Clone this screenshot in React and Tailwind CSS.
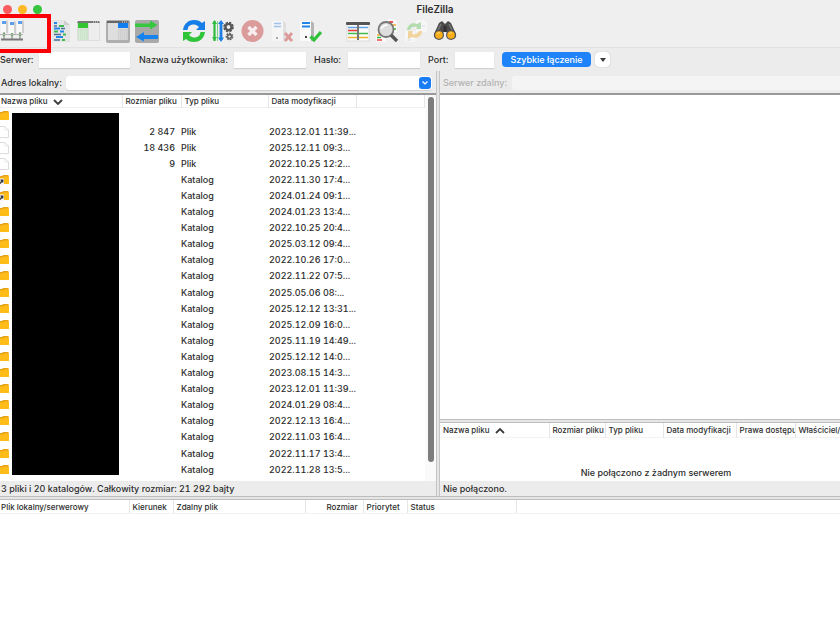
import React from "react";

const files = [
  ["up", "", "", ""],
  ["file", "2 847", "Plik", "2023.12.01 11:39..."],
  ["file", "18 436", "Plik", "2025.12.11 09:3..."],
  ["file", "9", "Plik", "2022.10.25 12:2..."],
  ["link", "", "Katalog", "2022.11.30 17:4..."],
  ["link", "", "Katalog", "2024.01.24 09:1..."],
  ["dir", "", "Katalog", "2024.01.23 13:4..."],
  ["dir", "", "Katalog", "2022.10.25 20:4..."],
  ["dir", "", "Katalog", "2025.03.12 09:4..."],
  ["dir", "", "Katalog", "2022.10.26 17:0..."],
  ["dir", "", "Katalog", "2022.11.22 07:5..."],
  ["dir", "", "Katalog", "2025.05.06 08:..."],
  ["dir", "", "Katalog", "2025.12.12 13:31..."],
  ["dir", "", "Katalog", "2025.12.09 16:0..."],
  ["dir", "", "Katalog", "2025.11.19 14:49..."],
  ["dir", "", "Katalog", "2025.12.12 14:0..."],
  ["dir", "", "Katalog", "2023.08.15 14:3..."],
  ["dir", "", "Katalog", "2023.12.01 11:39..."],
  ["dir", "", "Katalog", "2024.01.29 08:4..."],
  ["dir", "", "Katalog", "2022.12.13 16:4..."],
  ["dir", "", "Katalog", "2022.11.03 16:4..."],
  ["dir", "", "Katalog", "2022.11.17 13:4..."],
  ["dir", "", "Katalog", "2022.11.28 13:5..."],
  ["dir", "", "", ""],
];

function RowIcon({ kind }) {
  if (kind === "file") {
    return (
      <svg width="10" height="12" viewBox="0 0 10 12" className="block">
        <path d="M-2 .5H5L8.500 4V11.500H-2Z" fill="#fff" stroke="#dcdcdc" />
        <path d="M5 .5V4H8.500" fill="none" stroke="#e8e8e8" />
      </svg>
    );
  }
  return (
    <svg width="10" height="12" viewBox="0 0 10 12" className="block">
      <path d="M-3 2H2L3 1H8.500V9.500H-3Z" fill="#e8a317" />
      <path d="M-3 3.500H2.500L4 2.500H9V10H-3Z" fill="#fdbc18" />
      {kind === "link" && (
        <>
          <path d="M-1 4.500H4V11H-1Z" fill="#f4f4f4" />
          <path d="M0 9.500L2.500 6.500M.5 6.200H2.800V8.500" stroke="#333" strokeWidth="1.200" fill="none" />
        </>
      )}
    </svg>
  );
}

const Svg = ({ children }) => (
  <svg width="24" height="24" viewBox="0 0 24 24" className="block">
    {children}
  </svg>
);

const Servers = () => (
  <Svg>
    {[[1, 1], [9, 2], [17, 1]].map(([x, y]) => (
      <g key={x}>
        <path d={`M${x} ${y}H${x + 5}L${x + 7} ${y + 1}V${y + 13}H${x}Z`} fill="#f8f8f8" />
        <path d={`M${x + 5} ${y}L${x + 7} ${y + 1}V${y + 13}H${x + 5}Z`} fill="#cfcfcf" />
        <rect x={x + 1} y={y + 1} width="4" height="3" fill="#5a9fe8" />
        <path d={`M${x + 3} ${y + 12}V21`} stroke="#888" strokeWidth="1.200" />
        <circle cx={x + 3} cy="15.500" r="1.500" fill="#5fae55" />
      </g>
    ))}
    <path d="M0 15.500H23" stroke="#b4b4b4" />
    <path d="M1 20.500H23" stroke="#777" strokeWidth="2" />
  </Svg>
);

const LogView = () => (
  <Svg>
    <path d="M4 1H16L22 6V23H4Z" fill="#e4e4e4" />
    <path d="M16 1V6H22" fill="#cfcfcf" />
    <path d="M6 4H9M6 9.500H12M12 12.500H16M8 18H15" stroke="#2388e8" strokeWidth="1.800" />
    <path d="M11 7H16M6 12.500H10M15 15.500H18M14 21H17" stroke="#3fba52" strokeWidth="1.800" />
    <path d="M6 7H9M13 9.500H17M6 15.500H13M6 21H12" stroke="#4b6f9b" strokeWidth="1.500" />
  </Svg>
);

const LocalTree = () => (
  <Svg>
    <rect x="0" y="2" width="23" height="20" rx="1" fill="#dedede" />
    <path d="M1 2H22L23 4H0Z" fill="#777" />
    <path d="M16 3H21" stroke="#ddd" strokeDasharray="1 1" />
    <rect x="1" y="4" width="10" height="5" fill="#31c631" />
    <rect x="1" y="10" width="10" height="11" fill="#cbe3c9" />
    <path d="M2 12H10M2 14H10M2 16H10M2 18H10M2 20H10" stroke="#e8f3e7" strokeDasharray="1 1" />
    <rect x="12" y="4" width="10" height="17" fill="#ededed" />
  </Svg>
);

const RemoteTree = () => (
  <Svg>
    <rect x="0" y="1" width="24" height="23" rx="2" fill="#aeaeae" />
    <rect x="2" y="3" width="20" height="18" fill="#dcdcdc" />
    <path d="M1 2H22L23 4H1Z" fill="#666" />
    <path d="M16 3H21" stroke="#ddd" strokeDasharray="1 1" />
    <rect x="2" y="5" width="10" height="16" fill="#dedede" />
    <rect x="12" y="4" width="10" height="5" fill="#137ef0" />
    <rect x="12" y="10" width="10" height="11" fill="#cfcfcf" />
    <path d="M13 12H21M13 14H21M13 16H21M13 18H21M13 20H21" stroke="#e2e2e2" strokeDasharray="1 1" />
  </Svg>
);

const Queue = () => (
  <Svg>
    <rect x="0" y="1" width="24" height="23" rx="2" fill="#a9a9a9" />
    <path d="M0 4.500H15V1.500L22.500 6L15 10.500V8H0Z" fill="#35c83f" />
    <path d="M23 16H9V13L1 18L9 22.500V20H23Z" fill="#1683ee" />
  </Svg>
);

const Refresh = () => (
  <Svg>
    <path d="M1 11C2 4 7 1 12 1C16 1 18 2 20 4L23 2V11H14L17 8C15 6 13 5.500 11 5.500C7 6 6 8 5.500 11Z" fill="#167ee8" />
    <path d="M23 13C22 20 17 23 12 23C8 23 6 22 4 20L1 22V13H10L7 16C9 18 11 18.500 13 18.500C17 18 18 16 18.500 13Z" fill="#2fc43a" />
  </Svg>
);

const Filters = () => (
  <Svg>
    <path d="M3.500 2V22" stroke="#30bd3f" strokeWidth="2.200" />
    <path d="M1 5L3.500 1L6 5ZM1 18L3.500 22L6 18Z" fill="#30bd3f" />
    <path d="M6.500 2V22" stroke="#7dcf86" />
    <path d="M10 3V21" stroke="#1e7ee2" strokeWidth="2.800" />
    <path d="M7 5L10 1L13 5ZM7 18.500L10 23L13 18.500Z" fill="#1e7ee2" />
    <circle cx="17.500" cy="8" r="3.700" fill="none" stroke="#565656" strokeWidth="3.200" strokeDasharray="2 .9" />
    <circle cx="17.500" cy="8" r="3" fill="none" stroke="#565656" strokeWidth="2" />
    <circle cx="18.500" cy="17.500" r="2.600" fill="none" stroke="#666" strokeWidth="2.500" strokeDasharray="1.600 .7" />
    <circle cx="18.500" cy="17.500" r="2" fill="none" stroke="#666" strokeWidth="1.500" />
  </Svg>
);

const Cancel = () => (
  <Svg>
    <circle cx="12.500" cy="12" r="11" fill="#dc9b9b" />
    <path d="M8.500 8L16.500 16M16.500 8L8.500 16" stroke="#f6eeee" strokeWidth="3.400" />
  </Svg>
);

const Disconnect = () => (
  <Svg>
    <path d="M3 2H14L17 4V22H3Z" fill="#f5f5f5" />
    <path d="M14 2L17 4V22H14Z" fill="#dfdfdf" />
    <path d="M5 4.500H12M5 7.500H12" stroke="#9fc3ea" strokeWidth="1.400" />
    <rect x="7" y="18" width="2" height="2" fill="#aaa" />
    <path d="M16 14L23 22M23 14L16 22" stroke="#dd9898" strokeWidth="2.800" />
  </Svg>
);

const Reconnect = () => (
  <Svg>
    <path d="M2 2H13L16 4V22H2Z" fill="#fafafa" />
    <path d="M13 2L16 4V22H13Z" fill="#b5b5b5" />
    <path d="M4 4H12M4 7.500H12" stroke="#2584e8" strokeWidth="1.900" />
    <rect x="7" y="17" width="2" height="2" fill="#444" />
    <path d="M12.500 17.500L16 21L23 13" stroke="#2fc13a" strokeWidth="3.200" fill="none" />
  </Svg>
);

const Compare = () => (
  <Svg>
    <rect x="1" y="5" width="22" height="17" fill="#fbfbfb" stroke="#dcdcdc" />
    <rect x="0" y="3" width="24" height="3" rx="1" fill="#555" />
    <path d="M2 8.500H11M13 8.500H22" stroke="#61a3e8" strokeWidth="1.500" />
    <path d="M2 11.500H11" stroke="#e33c3c" strokeWidth="1.600" />
    <path d="M2 14.500H11M13 14.500H22" stroke="#42bd4b" strokeWidth="1.600" />
    <path d="M2 18.500H11M13 18.500H22" stroke="#f1b432" strokeWidth="1.600" />
    <path d="M12 5V21" stroke="#555" strokeWidth="1.600" />
  </Svg>
);

const Find = () => (
  <Svg>
    <path d="M13 0H19L22 3V13H13ZM1 13H11V23H1Z" fill="#fafafa" />
    <path d="M14 3H18" stroke="#e93434" strokeWidth="1.700" />
    <path d="M15 6H21M2 16H5" stroke="#efa92b" strokeWidth="1.600" />
    <path d="M2 21H7" stroke="#e44" strokeWidth="1.500" />
    <path d="M2 18.500H6M17 10H21" stroke="#35b645" strokeWidth="1.500" />
    <circle cx="11" cy="10.500" r="7.500" fill="#dededf" stroke="#777" strokeWidth="1.800" />
    <path d="M6.500 10C7.500 7 9.500 6 12.500 6" stroke="#fff" strokeWidth="1.500" fill="none" />
    <path d="M16 16L22 22" stroke="#555" strokeWidth="3.300" />
  </Svg>
);

const SyncBrowse = () => (
  <Svg>
    <path d="M12 1H20L23 4V13H12ZM1 12H11V23H1Z" fill="#f6f6f6" />
    <path d="M3 11C4 5 8 3 13 5L17 3V10H12L13 8C9 7 7 8 6 11Z" fill="#b4dcae" />
    <path d="M18 12C18 18 12 20 8 18L4 20V12H9L8 15C11 16 14 15 15 12Z" fill="#f2d49b" />
    <path d="M18 7H21M3 21H7" stroke="#ccdcec" />
  </Svg>
);

const Binoculars = () => (
  <Svg>
    <path d="M6 4L9 2L12 5L15 2L18 4L23 15C24 20 19 21 16 19L13.500 13H10.500L8 19C4 21 0 19 1 15Z" fill="#4b4b4b" />
    <path d="M8 5L5 11M16 5L19 11" stroke="#777" strokeWidth="1.500" />
    <rect x="10.500" y="7" width="3" height="6" fill="#303030" />
    <circle cx="6" cy="16" r="5" fill="#555" />
    <circle cx="18" cy="16" r="5" fill="#555" />
    <circle cx="6" cy="16" r="3.800" fill="#fdae16" />
    <circle cx="18" cy="16" r="3.800" fill="#fdae16" />
    <path d="M4 15Q5 13 7 14M16 15Q17 13 19 14" stroke="#ffdc80" fill="none" />
  </Svg>
);

const ToolGroup = ({ items }) => (
  <div className="flex gap-[5px]">
    {items.map(([label, Icon]) => (
      <button key={label} type="button" aria-label={label} className="size-6 shrink-0">
        <Icon />
      </button>
    ))}
  </div>
);

function SortArrow({ up }) {
  return (
    <svg width="10" height="6" viewBox="0 0 10 6" className="ml-[5px] inline-block align-middle">
      <path d={up ? "M1 5L5 1L9 5" : "M1 1L5 5L9 1"} fill="none" stroke="#3c3c3c" strokeWidth="1.800" />
    </svg>
  );
}

const th = "border-r border-[#e6e6e6] pt-px pl-[3px] text-left font-medium whitespace-nowrap";

function Splitter() {
  return <div className="h-[4px] shrink-0 border-y border-[#bdbdbd] bg-[#e6e6e6]" />;
}

function LocalPane() {
  return (
    <section className="flex w-[436px] shrink-0 flex-col">
      <div className="flex h-[22px] items-center pt-[2px]">
        <label htmlFor="local" className="w-[66px] shrink-0 pl-px font-medium">Adres lokalny:</label>
        <div className="relative mr-1 flex-1">
          <select id="local" className="block h-[14px] w-full appearance-none rounded-[3px] bg-white shadow-[0_1px_1px_#d0d0d0]" />
          <span className="pointer-events-none absolute top-px right-px flex size-3 items-center justify-center rounded-[3px] bg-[#1a7df5]">
            <svg width="6" height="4" viewBox="0 0 6 4"><path d="M.5 .5L3 3L5.500 .5" fill="none" stroke="#fff" strokeWidth="1.200" /></svg>
          </span>
        </div>
      </div>
      <div className="flex h-[388px] overflow-hidden border-t-2 border-[#999] bg-white">
        <div className="relative min-w-0 flex-1">
          <table className="h-[399px] w-full table-fixed border-collapse">
            <colgroup>
              <col className="w-[122px]" /><col className="w-[59px]" /><col className="w-[87px]" /><col className="w-[88px]" /><col />
            </colgroup>
            <thead>
              <tr className="h-[12px] border-b border-[#efefef] text-[8px] leading-[11px]">
                <th className={th + " pl-px"}>Nazwa pliku<SortArrow /></th>
                <th className={th}>Rozmiar pliku</th>
                <th className={th}>Typ pliku</th>
                <th className={th}>Data modyfikacji</th>
                <th className={th} />
              </tr>
            </thead>
            <tbody className="font-medium tabular-nums">
              {files.map(([kind, size, type, date], i) => (
                <tr key={i} className="h-4 leading-3 whitespace-nowrap">
                  <td className="p-0"><RowIcon kind={kind} /></td>
                  <td className="p-0 pr-[6px] text-right">{size}</td>
                  <td className="p-0">{type}</td>
                  <td className="p-0 pl-px">{date}</td>
                  <td className="p-0" />
                </tr>
              ))}
            </tbody>
          </table>
          <div className="absolute top-[18px] left-3 h-[362px] w-[107px] bg-black" />
        </div>
        <div className="w-[11px] bg-[#fafafa] pt-[2px] pl-[3px]">
          <div className="h-[365px] w-[6px] rounded-full bg-[#7d7d7d]" />
        </div>
      </div>
      <div className="h-[15px] pl-px leading-[15px] font-medium tabular-nums">3 pliki i 20 katalogów. Całkowity rozmiar: 21 292 bajty</div>
    </section>
  );
}

function RemotePane() {
  return (
    <section className="flex min-w-0 flex-1 flex-col">
      <div className="flex h-[22px] items-center pt-[2px] text-[#b3b3b3]">
        <label htmlFor="remote" className="w-[72px] shrink-0 pl-[3px] font-medium">Serwer zdalny:</label>
        <select id="remote" disabled className="block h-[14px] flex-1 appearance-none rounded-l-[3px] bg-[#f4f4f4] opacity-100" />
      </div>
      <div className="flex-1 border-t-2 border-[#999] bg-white" />
      <Splitter />
      <div className="h-[58px] overflow-hidden bg-white">
        <table className="w-[460px] table-fixed border-collapse">
          <colgroup>
            <col className="w-[109px]" /><col className="w-[56px]" /><col className="w-[58px]" /><col className="w-[73px]" /><col className="w-[59px]" /><col />
          </colgroup>
          <thead>
            <tr className="h-[14px] border-b border-[#f3f3f3] text-[8px] leading-[12px]">
              <th className={th}>Nazwa pliku<SortArrow up /></th>
              <th className={th}>Rozmiar pliku</th>
              <th className={th}>Typ pliku</th>
              <th className={th}>Data modyfikacji</th>
              <th className={th + " overflow-hidden"}>Prawa dostępu</th>
              <th className={th}>Właściciel/</th>
            </tr>
          </thead>
        </table>
        <p className="pt-[29px] pl-8 text-center leading-3 font-medium">Nie połączono z żadnym serwerem</p>
      </div>
      <div className="h-[15px] pl-[3px] leading-[15px] font-medium">Nie połączono.</div>
    </section>
  );
}

function Field({ id, label, labelClass, inputClass, type = "text" }) {
  return (
    <>
      <label htmlFor={id} className={"shrink-0 whitespace-nowrap " + labelClass}>{label}</label>
      <input id={id} type={type} className={"h-4 shrink-0 bg-white px-1 shadow-[0_1px_1px_#d0d0d0] " + inputClass} />
    </>
  );
}

export default function App() {
  return (
    <div className="relative flex min-h-screen flex-col overflow-hidden bg-[#ececec] font-['Inter','Liberation_Sans',sans-serif] text-[9px] text-[#2c2c2c]">
      <header className="flex h-[18px] items-center bg-[#efefef]">
        <div className="flex flex-1 gap-[6px] pl-[3px]">
          <span className="size-[9px] rounded-full bg-[#fb5a5f]" />
          <span className="size-[9px] rounded-full bg-[#fdb923]" />
          <span className="size-[9px] rounded-full bg-[#35c53f]" />
        </div>
        <h1 className="pl-[27px] text-[10px] font-semibold">FileZilla</h1>
        <div className="flex-1" />
      </header>

      <nav className="flex h-[30px] items-start border-b border-[#e2e2e2] bg-[#efefef] pt-px">
        <ToolGroup items={[["Menedżer stron", Servers]]} />
        <div className="pl-6"><ToolGroup items={[["Dziennik", LogView], ["Drzewo lokalne", LocalTree], ["Drzewo zdalne", RemoteTree], ["Kolejka", Queue]]} /></div>
        <div className="pl-[23px]"><ToolGroup items={[["Odśwież", Refresh], ["Przetwarzaj kolejkę", Filters], ["Anuluj", Cancel], ["Rozłącz", Disconnect], ["Połącz ponownie", Reconnect]]} /></div>
        <div className="pl-6"><ToolGroup items={[["Filtry", Compare], ["Porównaj", Find], ["Synchronizuj", SyncBrowse], ["Szukaj", Binoculars]]} /></div>
      </nav>

      <form className="flex h-[23px] items-center font-medium">
        <Field id="host" label="Serwer:" labelClass="w-[39px]" inputClass="w-[91px]" />
        <Field id="user" label="Nazwa użytkownika:" labelClass="ml-[9px] w-[95px]" inputClass="w-[72px]" />
        <Field id="pass" label="Hasło:" type="password" labelClass="ml-2 w-[34px]" inputClass="w-[72px]" />
        <Field id="port" label="Port:" labelClass="ml-2 w-[27px]" inputClass="w-[39px]" />
        <button type="button" className="ml-2 h-[15px] w-[89px] shrink-0 rounded-[4px] bg-[#1f84fa] font-medium text-white">Szybkie łączenie</button>
        <button type="button" aria-label="Historia połączeń" className="ml-1 flex size-[15px] shrink-0 items-center justify-center rounded-[4px] bg-white shadow-[0_0_1px_#999]">
          <svg width="6" height="4" viewBox="0 0 6 4"><path d="M0 0H6L3 4Z" fill="#3a3a3a" /></svg>
        </button>
      </form>

      <main className="flex">
        <LocalPane />
        <div className="w-[4px] shrink-0 border-x border-[#c4c4c4] bg-[#e6e6e6]" />
        <RemotePane />
      </main>
      <Splitter />

      <section className="flex-1 bg-white">
        <table className="w-[517px] table-fixed border-collapse">
          <colgroup>
            <col className="w-[129px]" /><col className="w-[44px]" /><col className="w-[132px]" /><col className="w-[58px]" /><col className="w-[44px]" /><col />
          </colgroup>
          <thead>
            <tr className="h-[13px] text-[8px] leading-[11px]">
              <th className={th + " pl-px"}>Plik lokalny/serwerowy</th>
              <th className={th}>Kierunek</th>
              <th className={th}>Zdalny plik</th>
              <th className={th + " pr-[5px] text-right"}>Rozmiar</th>
              <th className={th}>Priorytet</th>
              <th className={th}>Status</th>
            </tr>
          </thead>
        </table>
        <div className="border-t border-[#f3f3f3]" />
      </section>

      <div className="pointer-events-none absolute top-[14px] left-0 h-[39px] w-[51px] border-4 border-l-0 border-[#fb0007]" />
    </div>
  );
}
